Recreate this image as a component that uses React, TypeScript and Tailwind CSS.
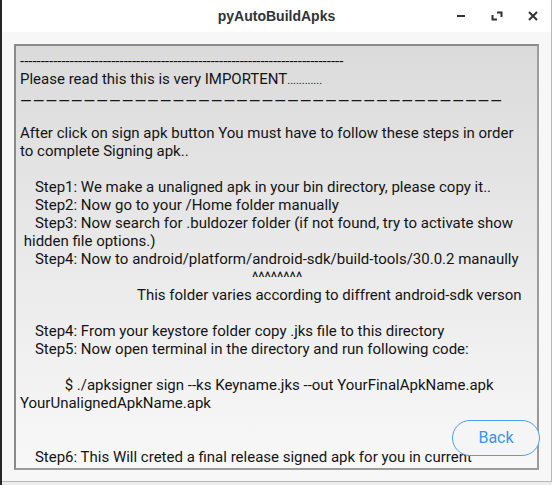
const lines: string[] = [
  '-'.repeat(78),
  '__PLEASE__',
  '__EMDASH__',
  '',
  'After click on sign apk button You must have to follow these steps in order',
  'to complete Signing apk..',
  '',
  '    Step1: We make a unaligned apk in your bin directory, please copy it..',
  '    Step2: Now go to your /Home folder manually',
  '    Step3: Now search for .buldozer folder (if not found, try to activate show',
  ' hidden file options.)',
  '    Step4: Now to android/platform/android-sdk/build-tools/30.0.2 manaully',
  '__CARETS__',
  '__FOLDER__',
  '',
  '    Step4: From your keystore folder copy .jks file to this directory',
  '    Step5: Now open terminal in the directory and run following code:',
  '',
  '            $ ./apksigner sign --ks Keyname.jks --out YourFinalApkName.apk',
  'YourUnalignedApkName.apk',
  '',
  '',
  '    Step6: This Will creted a final release signed apk for you in current'
];

const renderLine = (line: string) => {
  if (line === '__PLEASE__') {
    return (
      <>
        Please read this this is very IMPORTENT
        <span className="text-[11px]">............</span>
      </>
    );
  }
  if (line === '__EMDASH__') {
    return (
      <span className="relative top-[4px] tracking-[1px]">{'—'.repeat(38)}</span>
    );
  }
  if (line === '__CARETS__') {
    return <span className="pl-[232px]">^^^^^^^^</span>;
  }
  if (line === '__FOLDER__') {
    return (
      <span className="pl-[117px]">
        This folder varies according to diffrent android-sdk verson
      </span>
    );
  }
  return line;
};

const TitleButtons = () => (
  <div className="flex items-center gap-[20px] pr-[10px] text-[#2e3436]">
    <svg width="16" height="16" viewBox="0 0 16 16">
      <rect x="4" y="7" width="8" height="2" fill="currentColor" />
    </svg>
    <svg width="16" height="16" viewBox="0 0 16 16">
      <path d="M8 4.5h4.5V9" stroke="currentColor" strokeWidth="2" fill="none" />
      <path d="M3.5 7v4.5H8" stroke="currentColor" strokeWidth="2" fill="none" />
    </svg>
    <svg width="16" height="16" viewBox="0 0 16 16">
      <path d="M4 4l8 8M12 4l-8 8" stroke="currentColor" strokeWidth="2" fill="none" />
    </svg>
  </div>
);

export default function App() {
  return (
    <div className="flex h-[485px] w-[552px] overflow-hidden bg-[#ececec]">
      <div className="w-[2px] shrink-0 bg-[#262626]" />
      <div className="flex h-[482px] min-w-0 flex-1 flex-col border-r border-b border-[#b8b8b8] bg-white">
        <header className="grid h-[32px] shrink-0 grid-cols-[1fr_auto_1fr] items-center">
          <div />
          <h1 className="pt-[1px] font-['Liberation_Sans',sans-serif] text-[14px] font-bold text-[#2e3436]">
            pyAutoBuildApks
          </h1>
          <div className="flex justify-end">
            <TitleButtons />
          </div>
        </header>
        <main className="relative flex min-h-0 flex-1 flex-col bg-[#f7f7f7] pt-[12px] pr-[12px] pb-[11px] pl-[12px]">
          <div className="min-h-0 flex-1 overflow-hidden border-2 border-t-[#8a8a8a] border-l-[#8a8a8a] border-r-[#9c9c9c] border-b-[#9c9c9c] bg-linear-to-b from-[#dbdbdb] to-[#f8f8f8] pt-[6px] pl-[4px] font-['Roboto',sans-serif] text-[15px] leading-[18px] text-[#141414]">
            {lines.map((line, index) => (
              <div key={index} className="h-[18px] whitespace-pre">
                {renderLine(line)}
              </div>
            ))}
          </div>
          <button
            type="button"
            className="absolute top-[388px] left-[450px] h-[36px] w-[88px] rounded-full border-[1.5px] border-[#4aa0ec] bg-[#f5f5f5] font-['Roboto',sans-serif] text-[16px] text-[#3b96e6]"
          >
            Back
          </button>
        </main>
      </div>
    </div>
  );
}
